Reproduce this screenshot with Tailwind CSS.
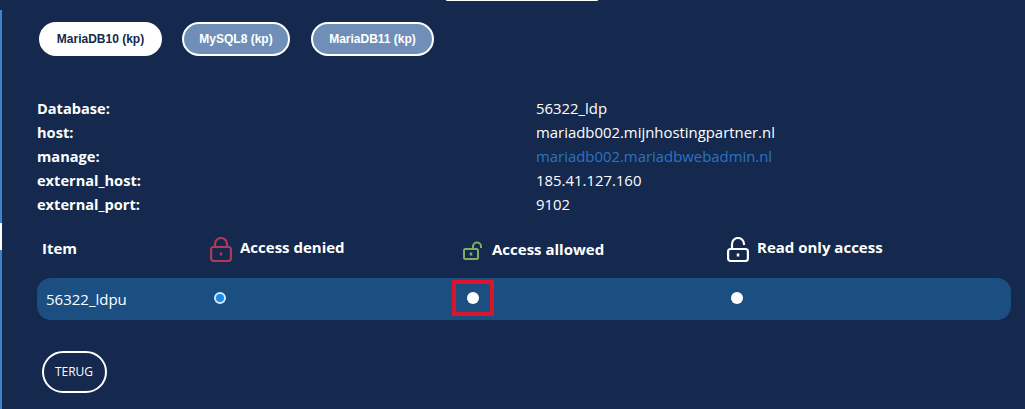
<!DOCTYPE html>
<html lang="en">
<head>
    <meta charset="UTF-8">
    <title>Database access</title>
    <script src="https://cdn.jsdelivr.net/npm/@tailwindcss/browser@4"></script>
</head>
<body class="bg-[#14294d] text-white h-[409px] w-[1025px] overflow-hidden relative font-['Open_Sans','Noto_Sans',sans-serif]">
    <!-- tab edge at the top -->
    <div class="absolute left-[446px] top-0 w-[152px] h-[1px] bg-white rounded-b"></div>

    <div class="mt-[10px] h-[399px] border-l-2 border-[#3a84c8] pl-[35px] pr-[14px] pt-[12px]">
        <!-- Database tabs -->
        <div class="flex pl-[2px] font-['Liberation_Sans',sans-serif] text-[12px] font-bold">
            <button class="w-[123px] h-[34px] rounded-full bg-white text-[#14294d] border-2 border-white">MariaDB10 (kp)</button>
            <button class="ml-[20px] w-[108px] h-[34px] rounded-full bg-[#6f8fb9] text-white border-2 border-white">MySQL8 (kp)</button>
            <button class="ml-[21px] w-[123px] h-[34px] rounded-full bg-[#6f8fb9] text-white border-2 border-white">MariaDB11 (kp)</button>
        </div>

        <!-- Connection details -->
        <div class="mt-[40px] grid grid-cols-[499px_1fr] text-[14.9px] leading-[24px]">
            <div class="font-bold text-[14.6px]">Database:</div><div>56322_ldp</div>
            <div class="font-bold text-[14.6px]">host:</div><div>mariadb002.mijnhostingpartner.nl</div>
            <div class="font-bold text-[14.6px]">manage:</div><div><a href="#" class="text-[#2b73c4]">mariadb002.mariadbwebadmin.nl</a></div>
            <div class="font-bold text-[14.6px]">external_host:</div><div>185.41.127.160</div>
            <div class="font-bold text-[14.6px]">external_port:</div><div>9102</div>
        </div>

        <!-- Access table -->
        <div class="mt-[21px] grid grid-cols-[173px_253px_264px_1fr] h-[33px] text-[15px] font-bold">
            <div class="pl-[5px] leading-[22px]">Item</div>
            <div class="flex gap-[8px]">
                <svg class="w-[22px] h-[25px]" viewBox="0 0 22 25" fill="none" stroke="#b03a56" stroke-width="2.2"><rect x="1.1" y="10" width="19.8" height="14" rx="2.5"/><path d="M5 10V7a6 6 0 0 1 12 0v3"/><path d="M11 15.5v3" stroke-width="2.5"/></svg>
                <span class="leading-[20px]">Access denied</span>
            </div>
            <div class="flex gap-[7px]">
                <svg class="w-[22px] h-[25px]" viewBox="0 0 22 25" fill="none" stroke="#7fae62" stroke-width="2"><rect x="1" y="12" width="14" height="10" rx="1.5"/><path d="M10 12V9.5a4 4 0 0 1 8 0v1.5"/><path d="M8 15.5v3" stroke-width="2.5"/></svg>
                <span class="pt-[2px] leading-[20px]">Access allowed</span>
            </div>
            <div class="flex gap-[8px]">
                <svg class="w-[22px] h-[25px]" viewBox="0 0 22 25" fill="none" stroke="#ffffff" stroke-width="2.2"><rect x="1.1" y="12" width="19.8" height="12" rx="2.5"/><path d="M5 12V7a6 6 0 0 1 12 0v1"/><path d="M11 16.5v3" stroke-width="2.5"/></svg>
                <span class="leading-[20px]">Read only access</span>
            </div>
        </div>

        <div class="mt-[8px] grid grid-cols-[173px_253px_264px_1fr] items-center h-[42px] rounded-[14px] bg-[#1b4e81] text-[15px]">
            <div class="pl-[9px]">56322_ldpu</div>
            <div class="pl-[4px] pb-[2px]"><span class="block w-[12px] h-[12px] rounded-full bg-[#1e88e5] border-2 border-[#cfeaff]"></span></div>
            <div class="pl-[4px] pb-[2px] relative">
                <span class="block w-[12px] h-[12px] rounded-full bg-white"></span>
                <!-- highlight around the radio -->
                <div class="absolute left-[-11px] top-[-12px] w-[42px] h-[36px] border-4 border-[#d8162e]"></div>
            </div>
            <div class="pl-[4px] pb-[2px]"><span class="block w-[12px] h-[12px] rounded-full bg-white"></span></div>
        </div>

        <button class="mt-[31px] ml-[5px] block w-[65px] h-[42px] pr-[1px] rounded-full border-2 border-white text-[12px]">TERUG</button>
    </div>
    <div class="absolute left-0 top-[223px] w-[2px] h-[27px] bg-white"></div>
</body>
</html>
